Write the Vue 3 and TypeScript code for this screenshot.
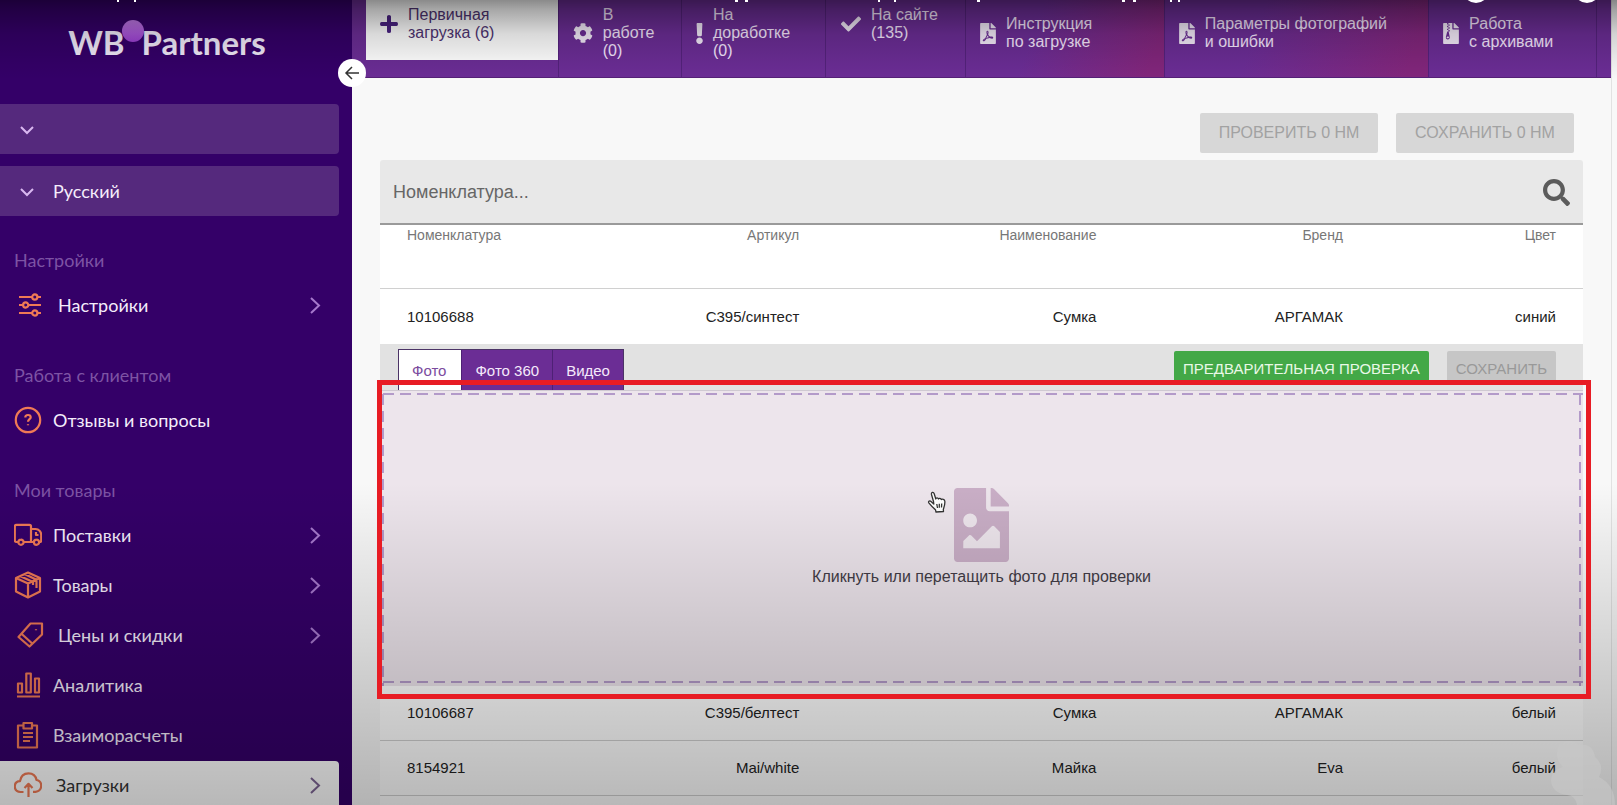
<script setup lang="ts">
import { ref } from 'vue'

type Shape = { d: string; box: string; w: number; h: number }
type NavItem = { text: string; icon: string; arrow: boolean; indent: number; active?: boolean }
type NavGroup = { title: string; items: NavItem[] }
type TopTab = { lines: string[]; icon: string; share: number; kind: string }
type Row = { id: string; article: string; name: string; brand: string; color: string }

const file = 'M248 160h136v328c0 13.3-10.7 24-24 24H24c-13.3 0-24-10.7-24-24V24C0 10.7 10.7 0 24 0h200v136c0 13.2 10.8 24 24 24z'
const fold = 'M377 105L279 7c-4.5-4.5-10.6-7-17-7h-6v128h128v-6.100c0-6.300-2.500-12.400-7-16.900z'

const shapes: Record<string, Shape> = {
  plus: { box: '0 0 18 18', w: 18, h: 18, d: 'M7 1.500Q7 0 9 0T11 1.500V7H16.500Q18 7 18 9T16.500 11H11V16.500Q11 18 9 18T7 16.500V11H1.500Q0 11 0 9T1.500 7H7Z' },
  gear: { box: '0 0 512 512', w: 20, h: 20, d: 'M487.4 315.7l-42.6-24.6c4.3-23.2 4.3-47 0-70.2l42.6-24.6c4.9-2.8 7.1-8.6 5.5-14-11.1-35.6-30-67.8-54.7-94.6-3.8-4.1-10-5.1-14.8-2.3L380.8 110c-17.9-15.4-38.5-27.3-60.8-35.1V25.8c0-5.6-3.9-10.5-9.4-11.7-36.7-8.2-74.3-7.8-109.2 0-5.5 1.2-9.4 6.1-9.4 11.7V75c-22.2 7.9-42.8 19.8-60.8 35.1L88.7 85.5c-4.9-2.8-11-1.9-14.8 2.3-24.7 26.7-43.6 58.9-54.7 94.6-1.7 5.4.6 11.2 5.5 14L67.3 221c-4.3 23.2-4.3 47 0 70.2l-42.6 24.6c-4.9 2.8-7.1 8.6-5.5 14 11.1 35.6 30 67.8 54.7 94.6 3.8 4.1 10 5.1 14.8 2.3l42.6-24.6c17.9 15.4 38.5 27.3 60.8 35.1v49.2c0 5.6 3.9 10.5 9.4 11.7 36.7 8.2 74.3 7.8 109.2 0 5.5-1.2 9.4-6.1 9.4-11.7v-49.2c22.2-7.900 42.8-19.8 60.8-35.1l42.6 24.6c4.9 2.8 11 1.9 14.8-2.300 24.7-26.7 43.6-58.9 54.7-94.6 1.5-5.5-.7-11.3-5.600-14.100zM256 336c-44.1 0-80-35.9-80-80s35.9-80 80-80 80 35.9 80 80-35.9 80-80 80z' },
  bang: { box: '16 0 160 512', w: 7, h: 21, d: 'M176 432c0 44.112-35.888 80-80 80s-80-35.888-80-80 35.888-80 80-80 80 35.888 80 80zM25.26 25.199l13.6 272C39.499 309.972 50.041 320 62.83 320h66.34c12.789 0 23.331-10.028 23.97-22.801l13.6-272C167.425 11.49 156.496 0 142.77 0H49.23C35.504 0 24.575 11.49 25.26 25.199z' },
  check: { box: '0 64 512 384', w: 20, h: 16, d: 'M173.898 439.404l-166.4-166.4c-9.997-9.997-9.997-26.206 0-36.204l36.203-36.204c9.997-9.998 26.207-9.998 36.204 0L192 312.69 432.095 72.596c9.997-9.997 26.207-9.997 36.204 0l36.203 36.204c9.997 9.997 9.997 26.206 0 36.204l-294.4 294.401c-9.998 9.997-26.207 9.997-36.204-.001z' },
  pdf: { box: '0 0 384 512', w: 16, h: 21, d: 'M181.9 256.1c-5-16-4.9-46.9-2-46.9 8.4 0 7.6 36.9 2 46.9zm-1.7 47.2c-7.7 20.2-17.3 43.3-28.4 62.7 18.3-7 39-17.2 62.9-21.9-12.7-9.6-24.9-23.4-34.5-40.8zM86.1 428.1c0 .8 13.2-5.4 34.9-40.2-6.7 6.3-29.1 24.5-34.9 40.2zM248 160h136v328c0 13.3-10.7 24-24 24H24c-13.3 0-24-10.7-24-24V24C0 10.7 10.7 0 24 0h200v136c0 13.2 10.8 24 24 24zm-8 171.8c-20-12.2-33.3-29-42.7-53.8 4.5-18.5 11.6-46.6 6.2-64.2-4.7-29.4-42.4-26.5-47.8-6.8-5 18.3-.4 44.1 8.1 77-11.6 27.6-28.7 64.6-40.8 85.8-.1 0-.1.1-.2.1-27.1 13.9-73.6 44.5-54.5 68 5.6 6.9 16 10 21.5 10 17.9 0 35.7-18 61.1-61.8 25.8-8.5 54.1-19.1 79-23.2 21.7 11.8 47.1 19.5 64 19.5 29.2 0 31.2-32 19.7-43.4-13.9-13.6-54.3-9.7-73.6-7.2z' + fold },
  zip: { box: '0 0 384 512', w: 16, h: 21, d: file + fold + 'M96 0h32v36H96zM128 36h32v34h-32zM96 70h32v34H96zM128 104h32v34h-32zM96 138h32v34H96zM128 172h32v34h-32zM100 206h34l26 128c7 44-16 66-46 66s-53-24-46-66zM114 332c-19 0-29 8-29 20s10 21 29 21 29-9 29-21-10-20-29-20z' },
  search: { box: '0 0 512 512', w: 27, h: 27, d: 'M505 442.7L405.3 343c-4.500-4.500-10.6-7-17-7H372c27.6-35.3 44-79.7 44-128C416 93.1 322.9 0 208 0S0 93.1 0 208s93.1 208 208 208c48.3 0 92.7-16.4 128-44v16.3c0 6.4 2.5 12.5 7 17l99.7 99.7c9.4 9.4 24.6 9.4 33.9 0l28.3-28.3c9.4-9.4 9.4-24.6.1-34zM208 336c-70.7 0-128-57.2-128-128 0-70.7 57.2-128 128-128 70.7 0 128 57.2 128 128 0 70.7-57.2 128-128 128z' },
  image: { box: '0 0 384 512', w: 55, h: 74, d: 'M384 121.941V128H256V0h6.059a24 24 0 0 1 16.97 7.029l97.941 97.941a24.002 24.002 0 0 1 7.03 16.971zM248 160c-13.2 0-24-10.8-24-24V0H24C10.745 0 0 10.745 0 24v464c0 13.255 10.745 24 24 24h336c13.255 0 24-10.745 24-24V160H248zm-135.455 16c26.51 0 48 21.49 48 48s-21.49 48-48 48-48-21.49-48-48 21.491-48 48-48zm208 240h-256l.485-48.485L104.545 328c4.686-4.686 11.799-4.201 16.485.485L160.545 368 264.06 264.485c4.686-4.686 12.284-4.686 16.971 0L320.545 304v112z' },
}

/* Outline icons of the side menu, drawn on a 28px grid */
const outlines: Record<string, string> = {
  sliders: 'M3 6H16M21.500 6H25M3 14H7M12.500 14H25M3 22H16M21.500 22H25M18.800 3.400a2.600 2.600 0 1 1 0 5.200a2.600 2.600 0 1 1 0-5.200M9.700 11.400a2.600 2.600 0 1 1 0 5.200a2.600 2.600 0 1 1 0-5.200M18.800 19.400a2.600 2.600 0 1 1 0 5.200a2.600 2.600 0 1 1 0-5.200',
  question: 'M14 1.800a12.200 12.200 0 1 1 0 24.400a12.200 12.200 0 1 1 0-24.400M11.300 11.400Q11.300 9 14 9T16.700 11.300C16.700 13.200 14 13.300 14 15.800M14 18.300V19.300',
  truck: 'M4 21H2.500Q.8 21 .8 19V5.500Q.8 3.800 2.500 3.800H15.500Q17 3.800 17 5.500V21H10M17 8H21.500C25 8 27.200 11 27.200 14V19.500Q27.200 21 25.500 21M17 21H19.500M7 18.600a2.600 2.600 0 1 1 0 5.200a2.600 2.600 0 1 1 0-5.200M22.500 18.600a2.600 2.600 0 1 1 0 5.200a2.600 2.600 0 1 1 0-5.200M22 11V14H24.500',
  box: 'M14 1.500L26 7V20.500L14 26.500L2 20.500V7ZM2 7L14 12.500L26 7M14 12.500V26.500M6.500 5.200L19 11M11 3.200L22.500 8.700V17M19 11V14',
  tag: 'M2.500 16L14.500 2.500L26 2.500V13.500L13.500 25.500ZM5.500 12.800L16.500 22.800M20 8.200V9.200',
  chart: 'M3 25.500H26M4 12.500H8V21.500H4ZM12.300 2.500H16.800V21.500H12.300ZM21 7.500H25V21.500H21Z',
  clipboard: 'M9.500 4.500H4V26.500H23V4.500H18M9.500 2H18V7.500H9.500ZM9 12H19M9 16H19M9 20H16',
  upload: 'M9.500 21H6.500C2.800 20.700 .8 18.300 .8 15.400C.8 12.400 3 10.400 6 10.200C6.800 5 10.300 2.300 14.500 2.300C19 2.300 21.800 5 22.500 9C25.500 9.500 27.200 12 27.200 14.700C27.200 18 25 20.300 21.500 20.800H19M14.500 26V13.500M10.500 17L14.500 12.800L18.500 17',
}

const groups: NavGroup[] = [
  { title: 'Настройки', items: [{ text: 'Настройки', icon: 'sliders', arrow: true, indent: 2 }] },
  { title: 'Работа с клиентом', items: [{ text: 'Отзывы и вопросы', icon: 'question', arrow: false, indent: 0 }] },
  {
    title: 'Мои товары',
    items: [
      { text: 'Поставки', icon: 'truck', arrow: true, indent: 0 },
      { text: 'Товары', icon: 'box', arrow: true, indent: 0 },
      { text: 'Цены и скидки', icon: 'tag', arrow: true, indent: 2 },
      { text: 'Аналитика', icon: 'chart', arrow: false, indent: 0 },
      { text: 'Взаиморасчеты', icon: 'clipboard', arrow: false, indent: 0 },
      { text: 'Загрузки', icon: 'upload', arrow: true, indent: 1, active: true },
    ],
  },
]

const topTabs: TopTab[] = [
  { lines: ['Первичная', 'загрузка (6)'], icon: 'plus', share: 193, kind: 'current' },
  { lines: ['В', 'работе', '(0)'], icon: 'gear', share: 123, kind: '' },
  { lines: ['На', 'доработке', '(0)'], icon: 'bang', share: 144, kind: '' },
  { lines: ['На сайте', '(135)'], icon: 'check', share: 140, kind: 'raised' },
  { lines: ['Инструкция', 'по загрузке'], icon: 'pdf', share: 199, kind: 'warm' },
  { lines: ['Параметры фотографий', 'и ошибки'], icon: 'pdf', share: 265, kind: 'warm' },
  { lines: ['Работа', 'с архивами'], icon: 'zip', share: 168, kind: '' },
]

const rows: Row[] = [
  { id: '10106688', article: 'С395/синтест', name: 'Сумка', brand: 'АРГАМАК', color: 'синий' },
  { id: '10106687', article: 'С395/белтест', name: 'Сумка', brand: 'АРГАМАК', color: 'белый' },
  { id: '8154921', article: 'Mai/white', name: 'Майка', brand: 'Eva', color: 'белый' },
]
const mediaTabs = ['Фото', 'Фото 360', 'Видео']
const media = ref('Фото')
const query = ref('')
const language = ref('Русский')
const supplier = ref('')
</script>

<template>
  <div class="page">
    <aside class="side">
      <a class="logo" href="#"><span>WB</span><i class="dot"></i><span>Partners</span></a>
      <button class="collapse" type="button" aria-label="Свернуть меню">
        <svg width="16" height="16" viewBox="0 0 16 16"><path d="M15 8H2M8 2L2 8L8 14" /></svg>
      </button>
      <div class="pickers">
        <div class="picker">
          <svg width="14" height="9" viewBox="0 0 14 9"><path d="M1 1L7 7L13 1" /></svg>
          <select v-model="supplier" aria-label="Поставщик"><option value=""></option></select>
        </div>
        <div class="picker">
          <svg width="14" height="9" viewBox="0 0 14 9"><path d="M1 1L7 7L13 1" /></svg>
          <select v-model="language" aria-label="Язык"><option>Русский</option></select>
        </div>
      </div>
      <nav>
        <section v-for="g in groups" :key="g.title">
          <h2>{{ g.title }}</h2>
          <a v-for="item in g.items" :key="item.text" href="#" class="nav-item" :class="{ active: item.active, ['in' + item.indent]: true }">
            <svg class="outline" width="28" height="28" viewBox="0 0 28 28"><path :d="outlines[item.icon]" /></svg>
            <span>{{ item.text }}</span>
            <svg v-if="item.arrow" class="arrow" width="11" height="17" viewBox="0 0 11 17"><path d="M1 1L9 8.500L1 16" /></svg>
          </a>
        </section>
      </nav>
    </aside>

    <main class="main">
      <nav class="topbar">
        <a v-for="t in topTabs" :key="t.lines.join(' ')" href="#" class="tab" :class="t.kind" :style="{ flexGrow: t.share }">
          <span class="tab-body">
            <svg :width="shapes[t.icon].w" :height="shapes[t.icon].h" :viewBox="shapes[t.icon].box"><path :d="shapes[t.icon].d" fill-rule="evenodd" /></svg>
            <span><span v-for="l in t.lines" :key="l" class="line">{{ l }}</span></span>
          </span>
        </a>
      </nav>

      <div class="content">
        <div class="actions">
          <button type="button" disabled>ПРОВЕРИТЬ 0 НМ</button>
          <button type="button" disabled>СОХРАНИТЬ 0 НМ</button>
        </div>
        <div class="search">
          <input v-model="query" type="text" placeholder="Номенклатура..." aria-label="Номенклатура" />
          <button type="button" aria-label="Найти">
            <svg width="27" height="27" viewBox="0 0 512 512"><path :d="shapes.search.d" /></svg>
          </button>
        </div>
        <table>
          <colgroup><col class="c1" /><col class="c2" /><col class="c3" /><col class="c4" /><col class="c5" /></colgroup>
          <thead>
            <tr><th>Номенклатура</th><th>Артикул</th><th>Наименование</th><th>Бренд</th><th>Цвет</th></tr>
          </thead>
          <tbody>
            <template v-for="(r, i) in rows" :key="r.id">
              <tr class="row" :class="{ open: i === 0 }">
                <td>{{ r.id }}</td><td>{{ r.article }}</td><td>{{ r.name }}</td><td>{{ r.brand }}</td><td>{{ r.color }}</td>
              </tr>
              <tr v-if="i === 0">
                <td colspan="5" class="detail">
                  <div class="detail-bar">
                    <div class="media">
                      <button v-for="m in mediaTabs" :key="m" type="button" :class="{ on: media === m }" @click="media = m">{{ m }}</button>
                    </div>
                    <div class="detail-actions">
                      <button type="button" class="verify">ПРЕДВАРИТЕЛЬНАЯ ПРОВЕРКА</button>
                      <button type="button" disabled>СОХРАНИТЬ</button>
                    </div>
                  </div>
                  <div class="drop-wrap">
                    <label class="drop">
                      <input type="file" accept="image/*" multiple />
                      <svg width="55" height="74" viewBox="0 0 384 512" preserveAspectRatio="none"><path :d="shapes.image.d" /></svg>
                      <span>Кликнуть или перетащить фото для проверки</span>
                    </label>
                    <svg class="hand" width="20" height="22" viewBox="0 0 20 22">
                      <path d="M6.500 10.500L4.500 3.500C4 1 6.500 .6 7.200 2.700L8.800 8C9 6.500 11 6.600 11.500 8C12 6.900 13.800 7.200 14.300 8.600C15.300 7.700 17.500 8.300 17.800 10C18.200 14 17.200 16 16.300 18.300L16.500 20.500L9 21L8.500 18.800C6.500 17 4 14.500 1.800 11.800C1 10.300 2.800 9.300 4 10.400L6.800 13Z" />
                      <path d="M9.800 13L10.500 17M12.300 12.700V16.800M14.700 12.500L14.500 16.500" />
                    </svg>
                    <div class="frame"></div>
                  </div>
                </td>
              </tr>
            </template>
            <tr class="row"><td colspan="5"></td></tr>
          </tbody>
        </table>
      </div>
    </main>

    <div class="shade"></div>
    <svg class="controls" width="1617" height="6" viewBox="0 0 1617 6" aria-hidden="true">
      <path d="M117 0h2v2h-2zM134 0h2v2h-2zM735 0h3v2h-3zM745 0h3v2h-3zM878 0h2v2h-2zM894 0h2v2h-2zM977 0h3v2h-3zM1122 0h3v2h-3zM1133 0h3v2h-3zM1170 0h2v2h-2zM1178 0h2v2h-2z" />
      <circle cx="1476" cy="-10" r="13" /><circle cx="1587" cy="-10" r="13" />
    </svg>
    <svg class="smudge" width="68" height="64" viewBox="0 0 68 64" aria-hidden="true">
      <path d="M10 4Q20 -4 30 4Q44 2 46 16Q56 24 50 36Q66 44 66 64H28Q26 54 18 54Q2 52 2 38Q4 28 14 26Q4 16 10 4Z" />
    </svg>
  </div>
</template>

<style>
html, body { margin: 0; background: #f8f8f8; }
</style>

<style scoped>
.page { display: flex; height: 100vh; overflow: hidden; position: relative; font-family: "Liberation Sans", Arial, sans-serif; color: #222; }
.page * { box-sizing: border-box; }
a { text-decoration: none; color: inherit; }
button, select, input { font: inherit; }
svg { flex: none; }

.side { flex: 0 0 352px; background: #340068; font-family: Lato, "Open Sans", sans-serif; position: relative; }
.logo { display: flex; justify-content: center; height: 104px; padding: 22px 18px 0 0; font-size: 33px; line-height: 40px; font-weight: 700; color: #f0e9f9; }
.dot { width: 22px; height: 22px; margin: -2px -2px 0 -3px; border-radius: 50%; background: linear-gradient(#c27ae8, #9a3fd0); }
.collapse { position: absolute; right: -14px; top: 59px; width: 28px; height: 28px; padding: 0; border: 0; border-radius: 50%; background: #fff; display: grid; place-items: center; z-index: 3; }
.collapse path { fill: none; stroke: #333; stroke-width: 1.500; }
.pickers { display: grid; gap: 12px; padding-right: 13px; }
.picker { position: relative; display: flex; }
.picker svg { position: absolute; left: 20px; top: 22px; pointer-events: none; }
.picker path { fill: none; stroke: #d9b8f0; stroke-width: 2; }
.picker select { appearance: none; flex: 1; height: 50px; padding: 0 20px 1px 53px; border: 0; border-radius: 0 4px 4px 0; background: #55297d; color: #f5edfb; font-size: 18px; }
h2 { margin: 0; padding: 32px 14px 9px; font-size: 18px; line-height: 24px; font-weight: 400; color: #7d53a4; }
.nav-item { display: flex; align-items: center; gap: 11px; height: 50px; margin-right: 13px; padding: 0 18px 2px 14px; font-size: 18px; color: #f5edfb; border-radius: 0 4px 4px 0; }
.nav-item span { flex: 1; }
.in1 { gap: 14px; }
.in2 { padding-left: 16px; gap: 14px; }
.nav-item.active { background: #fff; color: #333; }
.outline path { fill: none; stroke: #f07a55; stroke-width: 2.200; stroke-linejoin: round; }
.arrow path { fill: none; stroke: #a678cc; stroke-width: 2; }
.active .arrow path { stroke: #7d6494; }

.main { flex: 1; min-width: 0; margin-right: 5px; background: #f8f8f8; border-right: 1px solid #e2e2e2; }
.topbar { display: flex; height: 78px; padding: 0 14px; background: #6b2d95; border-bottom: 1px solid #552077; }
.tab { flex: 1 1 0; min-width: 0; font-size: 16px; line-height: 18px; color: #f5e6fd; border-right: 1px solid #54227c; }
.tab-body { display: flex; align-items: center; gap: 10px; height: 66px; padding-left: 14px; }
.tab svg { fill: #f3eaf9; }
.line { display: block; white-space: nowrap; }
.current .tab-body { height: 60px; padding-bottom: 12px; background: #fff; color: #4f3473; }
.current svg { fill: #4b2384; }
.raised .tab-body { height: 48px; padding-left: 15px; }
.warm { background: linear-gradient(110deg, #6b2d95 35%, #82267c 92%); }

.content { padding: 35px 28px 0; }
.actions { display: flex; justify-content: flex-end; gap: 18px; padding-right: 9px; margin-bottom: 7px; }
.actions button { width: 178px; height: 40px; border: 0; border-radius: 2px; background: #d7d7d7; color: #a2a2a2; font-size: 16px; padding: 0; }
.search { display: flex; align-items: center; height: 65px; padding: 2px 13px 0; background: #e8e8e8; border-bottom: 2px solid #9a9a9a; border-radius: 3px 3px 0 0; }
.search input { flex: 1; min-width: 0; border: 0; padding: 0; background: none; font-size: 18px; height: 40px; color: #333; outline: 0; }
.search input::placeholder { color: #666; opacity: 1; }
.search button { display: flex; border: 0; padding: 0; background: none; }
.search path { fill: #5c5c5c; }

table { width: 100%; table-layout: fixed; border-collapse: separate; border-spacing: 0; background: #fff; }
.c1 { width: 18.5%; }
.c2 { width: 18.6%; }
.c3 { width: 24.7%; }
.c4 { width: 20.5%; }
.c5 { width: 17.7%; }
th, .row td { padding: 0 27px; text-align: right; font-weight: 400; border-bottom: 1px solid #d0d0d0; white-space: nowrap; }
th { height: 64px; padding-top: 1px; vertical-align: top; font-size: 14px; line-height: 18px; color: #777; }
th:first-child, .row td:first-child { text-align: left; }
.row td { height: 55px; padding-bottom: 1px; font-size: 15px; }
.row.open td { border-bottom: 0; }
.detail { padding: 0; background: #e2e2e2; }
.detail-bar { display: flex; justify-content: space-between; height: 46px; padding: 5px 27px 0 18px; }
.media { display: flex; height: 41px; border: 1px solid #4b3366; border-bottom: 0; }
.media button { border: 0; border-left: 1px solid #4e2175; background: #6b2d95; color: #f5e9fb; font-size: 15px; padding: 0 13px; }
.media button.on { background: #fff; color: #7b4b9e; border-left: 0; padding: 0 15px 0 13px; }
.detail-actions { display: flex; gap: 18px; padding-top: 2px; }
.detail-actions button { height: 34px; border: 0; border-radius: 2px; background: #c6c6c6; color: #999; font-size: 15px; padding: 0 9px; }
.detail-actions .verify { background: #43a847; color: #e9f8e6; }
.drop-wrap { position: relative; height: 296px; border-top: 1px solid #cfc9d2; }
.drop {
  --dash: #b39ac9;
  display: flex; flex-direction: column; align-items: center; height: 100%; padding-top: 97px; gap: 5px; font-size: 16px; line-height: 20px; color: #433d47; background-color: #ede5ec;
  background-image: linear-gradient(90deg, var(--dash) 11px, transparent 11px), linear-gradient(90deg, var(--dash) 11px, transparent 11px), linear-gradient(var(--dash) 11px, transparent 11px), linear-gradient(var(--dash) 11px, transparent 11px);
  background-size: 17px 2px, 17px 2px, 2px 17px, 2px 17px;
  background-repeat: repeat-x, repeat-x, repeat-y, repeat-y;
  background-position: 3px 2px, 3px calc(100% - 3px), 2px 3px, calc(100% - 2px) 3px;
}
.drop input { position: absolute; width: 1px; height: 1px; opacity: 0; }
.drop svg { fill: #c9aec6; }
.hand { position: absolute; left: calc(50% - 55px); top: 100px; }
.hand path { fill: #fff; stroke: #333; stroke-width: 1.300; stroke-linejoin: round; }
.frame { position: absolute; inset: -11px -8px -13px -3px; border: 5px solid #e81c24; z-index: 3; pointer-events: none; }

.shade { position: absolute; inset: 0; z-index: 2; pointer-events: none; background: linear-gradient(rgba(0, 0, 0, .46), rgba(0, 0, 0, .34) 10px, rgba(0, 0, 0, .15) 34px, rgba(0, 0, 0, .06) 60px, transparent 80px), linear-gradient(transparent 60%, rgba(0, 0, 0, .17) 84%, rgba(0, 0, 0, .28)); }
.controls { position: absolute; left: 0; top: 0; z-index: 3; fill: #fff; }
.smudge { position: absolute; right: 0; bottom: 0; z-index: 3; fill: #c8c8c8; opacity: .6; }
</style>
